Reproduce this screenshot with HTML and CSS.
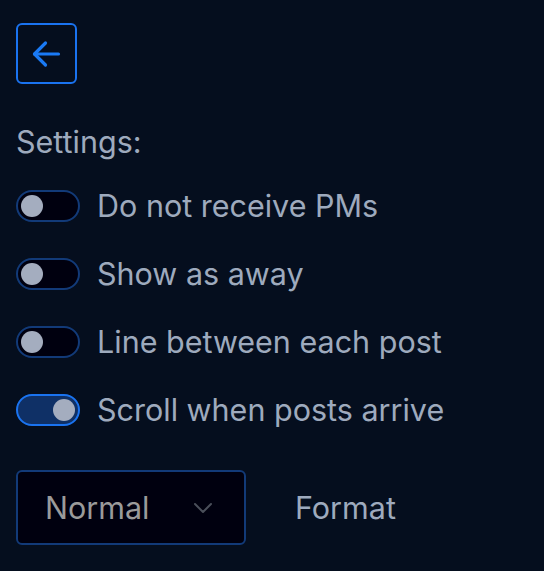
FILE: index.html
```html
<!DOCTYPE html>
<html>
<head>
<meta charset="utf-8">
<link rel="stylesheet" href="styles.css">
</head>
<body>
<div class="panel">
  <button class="back" aria-label="Back">
    <svg width="30" height="30" viewBox="0 0 30 30" fill="none" stroke="currentColor" stroke-width="3.2" stroke-linecap="round" stroke-linejoin="round"><path d="M3.5 15H27.5"/><path d="M14.5 4L3.5 15l11 11"/></svg>
  </button>
  <div class="title">Settings:</div>
  <div class="options">
    <label class="opt"><span class="toggle"><span class="knob"></span></span><span class="lbl">Do not receive PMs</span></label>
    <label class="opt"><span class="toggle"><span class="knob"></span></span><span class="lbl">Show as away</span></label>
    <label class="opt"><span class="toggle"><span class="knob"></span></span><span class="lbl">Line between each post</span></label>
    <label class="opt"><span class="toggle on"><span class="knob"></span></span><span class="lbl">Scroll when posts arrive</span></label>
  </div>
  <div class="format-row">
    <div class="select"><span class="sel-text">Normal</span>
      <svg class="chev" width="22" height="14" viewBox="0 0 22 14" fill="none" stroke="#4a4f5a" stroke-width="2" stroke-linecap="round" stroke-linejoin="round"><path d="M3 3l8 8 8-8"/></svg>
    </div>
    <span class="fmt">Format</span>
  </div>
</div>
</body>
</html>
```
FILE: styles.css
```css
html, body {
  margin: 0;
  padding: 0;
  background: #050e1e;
  height: 100%;
}
body {
  font-family: Inter, "Noto Sans", sans-serif;
  color: #9eaabd;
}
.panel {
  padding: 23px 16px 0 16px;
  display: flex;
  flex-direction: column;
}
.back {
  width: 61px;
  height: 61px;
  box-sizing: border-box;
  border: 2px solid #1a73f0;
  border-radius: 6px;
  background: transparent;
  color: #1a7af5;
  display: flex;
  align-items: center;
  justify-content: center;
  padding: 0 1px 0 0;
  cursor: pointer;
}
.title {
  font-size: 30.5px;
  line-height: 36px;
  margin-top: 40px;
}
.options {
  margin-top: 30px;
  display: flex;
  flex-direction: column;
  gap: 36px;
}
.opt {
  display: flex;
  align-items: center;
  gap: 17px;
  height: 32px;
}
.toggle {
  width: 64px;
  height: 32px;
  box-sizing: border-box;
  border: 2px solid #123a78;
  border-radius: 16px;
  background: #00000f;
  display: flex;
  align-items: center;
  padding: 0 3px;
  flex: none;
}
.toggle.on {
  background: #0f3066;
  border-color: #1a73f0;
  justify-content: flex-end;
}
.knob {
  width: 22px;
  height: 22px;
  border-radius: 50%;
  background: #a4adbf;
}
.lbl {
  font-size: 30.5px;
  line-height: 32px;
}
.format-row {
  margin-top: 44px;
  display: flex;
  align-items: center;
  gap: 49px;
}
.select {
  width: 230px;
  height: 75px;
  box-sizing: border-box;
  border: 2px solid #123a78;
  border-radius: 6px;
  background: #00000f;
  display: flex;
  align-items: center;
  justify-content: space-between;
  padding: 0 30px 0 27px;
}
.sel-text {
  font-size: 30.5px;
  color: #9a9a9a;
}
.fmt {
  font-size: 30.5px;
}
```
